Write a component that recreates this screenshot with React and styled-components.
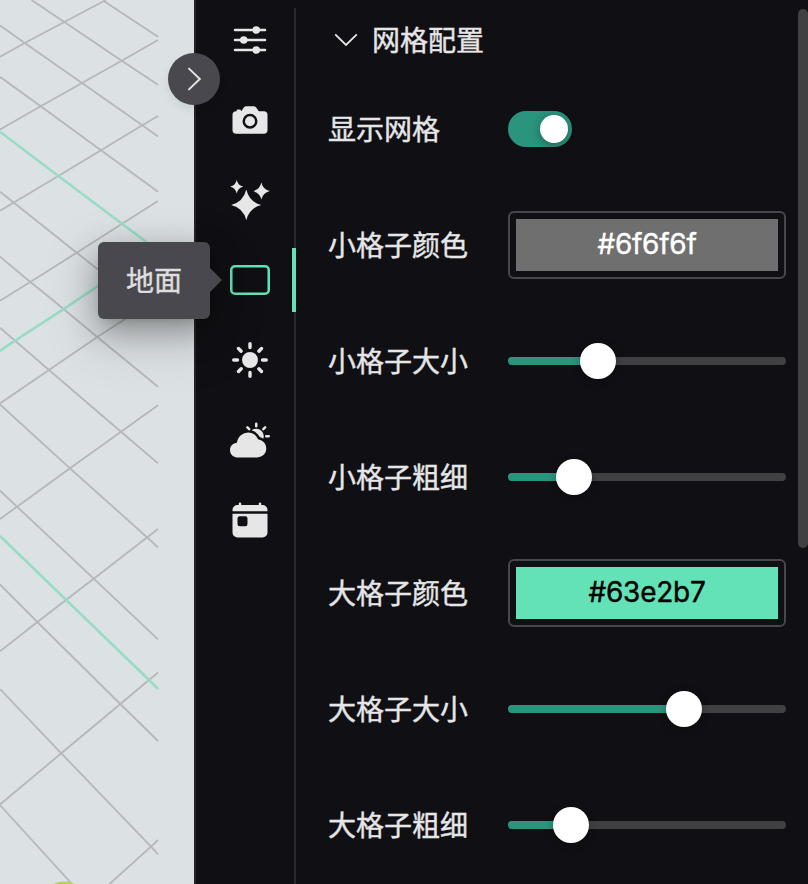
import React from "react";

import styled, { createGlobalStyle } from "styled-components";
import {
  IoCamera,
  IoOptionsOutline,
  IoPartlySunny,
  IoSunny,
  IoTabletLandscapeOutline,
  IoToday,
} from "react-icons/io5";

const panelColor = "#101014";
const textColor = "#e6e6e7";
const primaryColor = "#63e2b7";
const railColor = "#2a947d";
const popoverColor = "#48484e";

const SparklesIcon = () => (
  <svg viewBox="0 0 40 40" fill="currentColor">
    <path d="M16.3 9.6 Q19.3 22 31.3 25 Q19.3 28 16.3 40.2 Q13.3 28 1.2 25 Q13.3 22 16.3 9.6Z" />
    <path d="M31.4 2.5 Q32.9 9.5 39.9 11.1 Q32.9 12.7 31.4 19.6 Q29.9 12.7 22.9 11.1 Q29.9 9.5 31.4 2.5Z" />
    <path d="M6.7 0 Q7.9 5.5 13.3 6.7 Q7.9 7.9 6.7 13.4 Q5.5 7.9 0.1 6.7 Q5.5 5.5 6.7 0Z" />
  </svg>
);

const tabs = [
  { name: "options", Icon: IoOptionsOutline },
  { name: "camera", Icon: IoCamera },
  { name: "effects", Icon: SparklesIcon },
  { name: "ground", Icon: IoTabletLandscapeOutline, tip: "地面" },
  { name: "light", Icon: IoSunny },
  { name: "weather", Icon: IoPartlySunny },
  { name: "date", Icon: IoToday },
];

const settings = [
  { label: "显示网格", type: "switch" },
  { label: "小格子颜色", type: "color", value: "#6f6f6f", text: "#fff" },
  { label: "小格子大小", type: "slider", value: 90 },
  { label: "小格子粗细", type: "slider", value: 66 },
  { label: "大格子颜色", type: "color", value: "#63e2b7", text: "#000" },
  { label: "大格子大小", type: "slider", value: 176 },
  { label: "大格子粗细", type: "slider", value: 63 },
];

const cellLines = [
  "103,0.5 158,36.8",
  "31.5,0 64.3,22 121.7,60.7 158,84.8",
  "0,25.5 24.7,43 82,83 142.3,125.3 158,136.4",
  "0,76.8 40.7,106.3 101,150.3 158,191.8",
  "0,191.7 13.3,202.3 76.7,252.7 98,269.5 158,317",
  "0,256.7 30.3,282 52.7,300 97.3,337 158,386.7",
  "0,327.8 49,370 121,431.7 158,463.4",
  "0,404.5 70,468.3 147.3,537.5 158,547.3",
  "0,490.7 93.7,578.7 158,639.3",
  "0,584.5 37.3,622 120.3,704 158,741",
  "0,689 61.3,753.3 151,846.7 158,854.3",
  "0,805 72,884",
  "0,56.7 24.7,43 64.3,22 106,0",
  "0,129.5 40.7,106.3 82,83 121.7,60.7 158,40",
  "0,210.8 58.3,176 101,150.3 142.3,125.3 158,116",
  "0,300.7 30.3,282 76.7,252.7 121.7,224 158,201",
  "0,403.4 49,370 97.3,337 126.7,318",
  "0,519 17,506.7 70,468.3 121,431.7 158,405.2",
  "0,651.3 37.3,622 93.7,578.7 147.3,537.3 158,529",
  "0,804.5 61.3,753.3 120.3,704 158,672.5",
  "109.5,884 151,846.7 158,840",
];

const sectionLines = [
  "0,131.7 58.3,176 146,241.7 158,251",
  "0,536 66.2,600 149,680 158,689",
  "0,350.8 15,340.7 63.3,309.3 98,286 158,247",
];

const Setting = ({ item }) => (
  <Row>
    <Label>{item.label}</Label>
    {item.type === "switch" && (
      <Switch>
        <SwitchKnob />
      </Switch>
    )}
    {item.type === "color" && (
      <ColorBox>
        <Swatch $color={item.value} $text={item.text}>
          {item.value}
        </Swatch>
      </ColorBox>
    )}
    {item.type === "slider" && (
      <Slider>
        <SliderFill style={{ width: item.value }} />
        <SliderKnob />
      </Slider>
    )}
  </Row>
);

const App = () => (
  <>
    <GlobalStyle />
    <Page>
      <Scene>
        <svg width="194" height="884" fill="none">
          {cellLines.map((points) => (
            <polyline key={points} points={points} stroke="#b5b8ba" strokeWidth="1.8" />
          ))}
          {sectionLines.map((points) => (
            <polyline key={points} points={points} stroke="#98dcc6" strokeWidth="2.6" />
          ))}
          <ellipse cx="64" cy="889" rx="14" ry="7.5" fill="#b5d44b" />
        </svg>
      </Scene>
      <Panel>
        <CollapseButton>
          <svg width="52" height="52" fill="none" stroke="#e4e4e5" strokeWidth="2">
            <path d="M21 15.6 L31.8 26 L21 36.4" strokeLinecap="round" />
          </svg>
        </CollapseButton>
        <Tabs>
          {tabs.map(({ name, Icon, tip }) => (
            <Tab key={name} $active={Boolean(tip)} $filled={name === "options"}>
              <Icon />
              {tip && <Tooltip>{tip}</Tooltip>}
            </Tab>
          ))}
        </Tabs>
        <Content>
          <SectionHeader>
            <svg width="24" height="14" fill="none" stroke={textColor} strokeWidth="1.8">
              <path d="M1.2 2.3 L12 13 L22.8 2.3" />
            </svg>
            网格配置
          </SectionHeader>
          {settings.map((item) => (
            <Setting key={item.label} item={item} />
          ))}
        </Content>
        <Scrollbar />
      </Panel>
    </Page>
  </>
);
export default App;

const GlobalStyle = createGlobalStyle`
  * {
    box-sizing: border-box;
  }

  body {
    margin: 0;
    overflow: hidden;
    background: ${panelColor};
  }
`;

const Page = styled.div`
  display: flex;
  width: 808px;
  height: 884px;
  overflow: hidden;
  color: ${textColor};
  font-family: Inter, "Noto Sans CJK SC", sans-serif;
  font-size: 28px;
  -webkit-text-stroke: 0.4px currentColor;
`;

const Scene = styled.div`
  width: 194px;
  background: #dce1e3;

  svg {
    display: block;
  }
`;

const Panel = styled.aside`
  position: relative;
  display: flex;
  width: 614px;
  border-left: 2px solid #242427;
  background: ${panelColor};
`;

const CollapseButton = styled.div`
  position: absolute;
  z-index: 1;
  top: 53px;
  left: -28px;
  width: 52px;
  height: 52px;
  border-radius: 50%;
  background: ${popoverColor};
  box-shadow: 0 4px 8px rgba(0, 0, 0, 0.08);

  svg {
    display: block;
  }
`;

const Tabs = styled.nav`
  display: flex;
  flex-direction: column;
  gap: 16px;
  width: 100px;
  height: 876px;
  margin-top: 8px;
  border-right: 2px solid #2a2a2d;
`;

const Tab = styled.div`
  position: relative;
  display: flex;
  align-items: center;
  justify-content: center;
  height: 64px;
  margin-right: -2px;
  padding-left: 12px;
  border-right: 4px solid ${({ $active }) => ($active ? primaryColor : "transparent")};
  color: ${({ $active }) => ($active ? primaryColor : textColor)};

  & > svg {
    width: 40px;
    height: 40px;
  }

  circle {
    ${({ $filled }) => $filled && "fill: currentColor;"}
  }
`;

const Tooltip = styled.div`
  position: absolute;
  top: -6px;
  right: 82px;
  width: 112px;
  height: 77px;
  border-radius: 6px;
  background: ${popoverColor};
  box-shadow: 0 6px 12px -8px rgba(0, 0, 0, 0.24), 0 12px 32px rgba(0, 0, 0, 0.32),
    0 18px 48px 16px rgba(0, 0, 0, 0.08);
  color: #dededf;
  line-height: 78px;
  text-align: center;

  &::after {
    content: "";
    position: absolute;
    top: 26px;
    left: 112px;
    border: solid transparent;
    border-width: 12.5px 0 12.5px 12.5px;
    border-left-color: ${popoverColor};
  }
`;

const Content = styled.div`
  flex: 1;
  padding: 19px 12px 0 32px;
`;

const SectionHeader = styled.div`
  display: flex;
  align-items: center;
  gap: 14px;
  height: 40px;
  margin-bottom: 36px;
  padding-left: 6px;
`;

const Row = styled.div`
  display: flex;
  align-items: center;
  height: 68px;
  margin-bottom: 48px;
`;

const Label = styled.span`
  width: 180px;
  padding-top: 2px;
  line-height: 40px;
`;

const Switch = styled.div`
  display: flex;
  justify-content: flex-end;
  width: 64px;
  height: 36px;
  padding: 4px;
  border-radius: 18px;
  background: ${railColor};
`;

const SwitchKnob = styled.div`
  width: 28px;
  height: 28px;
  border-radius: 50%;
  background: #fff;
  box-shadow: 0 2px 8px rgba(0, 0, 0, 0.35);
`;

const ColorBox = styled.div`
  width: 278px;
  height: 68px;
  padding: 6px;
  border: 2px solid #48484c;
  border-radius: 6px;
`;

const Swatch = styled.div`
  height: 52px;
  background: ${({ $color }) => $color};
  color: ${({ $text }) => $text};
  letter-spacing: -0.25px;
  line-height: 50px;
  text-align: center;
`;

const Slider = styled.div`
  display: flex;
  align-items: center;
  width: 278px;
  height: 8px;
  border-radius: 4px;
  background: #404043;
`;

const SliderFill = styled.div`
  height: 8px;
  border-radius: 4px 0 0 4px;
  background: ${railColor};
`;

const SliderKnob = styled.div`
  flex: none;
  width: 36px;
  height: 36px;
  margin-left: -18px;
  border-radius: 50%;
  background: #fff;
  box-shadow: 0 2px 8px rgba(0, 0, 0, 0.3);
`;

const Scrollbar = styled.div`
  width: 10px;
  height: 539px;
  margin-top: 9px;
  border-radius: 5px;
  background: #404042;
`;
